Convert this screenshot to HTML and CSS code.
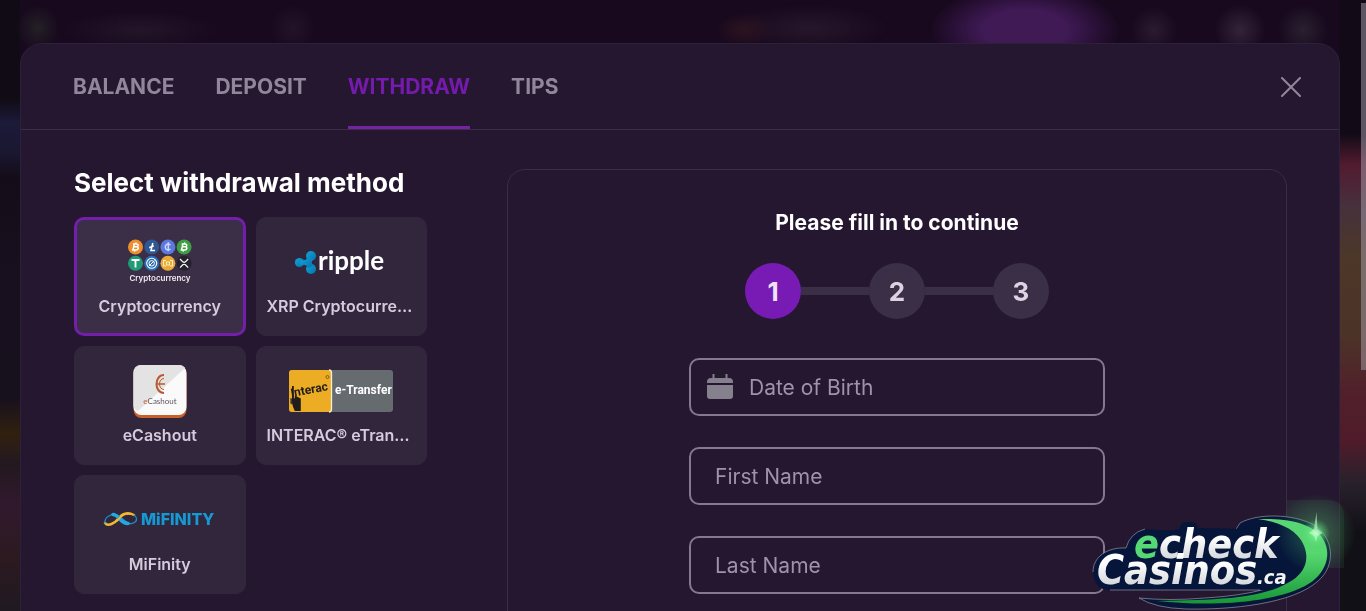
FILE: index.html
```html
<!DOCTYPE html>
<html lang="en">
<head>
<meta charset="utf-8">
<meta name="viewport" content="width=device-width, initial-scale=1">
<title>Withdraw</title>
<link rel="stylesheet" href="styles.css">
</head>
<body>
<div class="backdrop" aria-hidden="true"></div>
<main class="modal">
  <header class="modal-header">
    <nav class="tabs">
      <button class="tab" type="button">BALANCE</button>
      <button class="tab" type="button">DEPOSIT</button>
      <button class="tab tab-active" type="button" aria-current="page">WITHDRAW</button>
      <button class="tab" type="button">TIPS</button>
    </nav>
    <button class="close" type="button" aria-label="Close">
      <svg width="20" height="20" viewBox="0 0 20 20"><path d="M1 1L19 19M19 1L1 19" stroke="currentColor" stroke-width="2" stroke-linecap="round"/></svg>
    </button>
  </header>
  <div class="modal-body">
    <section class="methods">
      <h2 class="methods-title">Select withdrawal method</h2>
      <div class="method-grid">
        <button class="method method-selected" type="button" aria-pressed="true">
          <svg class="method-logo" width="104" height="52" viewBox="0 0 104 52">
            <circle cx="27.500" cy="12" r="7.500" fill="#ee8f2d"/><circle cx="43.700" cy="12" r="7.500" fill="#2f5795"/><circle cx="59.900" cy="12" r="7.500" fill="#5b78dc"/><circle cx="76.100" cy="12" r="7.500" fill="#3f9e42"/>
            <circle cx="27.500" cy="28.300" r="7.500" fill="#1f9b76"/><circle cx="43.700" cy="28.300" r="7.500" fill="#2b6fb6"/><circle cx="59.900" cy="28.300" r="7.500" fill="#e9ab35"/><circle cx="76.100" cy="28.300" r="7.500" fill="#25222d"/>
            <g fill="none" stroke="#fff" stroke-width="1.500" transform="translate(0 -1)">
              <path id="coin-b" d="M26.300 9.700l-1.300 6.500M25 10h3.500c2.500 0 2 2.800 0 2.800h-2.500h2.800c2.400.2 1.700 3.300-.8 3.300h-4M28.200 8.500l-.3 1.500M26.800 16l-.3 1.700"/>
              <use href="#coin-b" x="48.600"/>
              <path d="M44.800 9l-1.800 7.500h4M41.200 13.800l4.500-2"/>
              <path d="M62.500 10.800c-3-2-5.500 0-5.200 2.500s3 3.500 5.300 1.700M60.300 8.300v9" stroke="#c9d4ff"/>
              <path d="M23.500 26h8M27.500 26v7.500" stroke-width="1.900"/>
              <circle cx="43.700" cy="29.300" r="5" stroke-width="1.100"/><circle cx="43.700" cy="29.300" r="2.700" stroke-width="1"/><path d="M41 32l5.400-5.400" stroke-width="1"/>
              <path d="M58 26.500h-2.500v5.500h2.500M62 26.500h2.500v5.500H62M58.500 28h3v3h-3z" stroke-width="1.100" stroke="#fbe9c0"/>
              <path d="M72 25l2.800 2.800q1.300 1.100 2.600 0L80.200 25M72 33.600l2.800-2.800q1.300-1.100 2.600 0l2.800 2.800" stroke-width="1.200"/>
            </g>
            <text class="crypto-word" x="52" y="46" text-anchor="middle">Cryptocurrency</text>
          </svg>
          <span class="method-name">Cryptocurrency</span>
        </button>
        <button class="method" type="button">
          <svg class="method-logo" width="104" height="52" viewBox="0 0 104 52">
            <defs><linearGradient id="ripple-blue" x2="1" y2="1"><stop stop-color="#10a5d8"/><stop offset="1" stop-color="#0870ae"/></linearGradient></defs>
            <g fill="url(#ripple-blue)"><circle cx="10.500" cy="27.500" r="4.600"/><circle cx="22" cy="21" r="5"/><circle cx="22" cy="34" r="5"/><path d="M11 25q7 1 7.500-3l5.500 2q-2.500 3.500 0 7l-5.500 2q-.5-4-7.500-3z"/></g>
            <text class="ripple-word" x="29" y="35">ripple</text>
          </svg>
          <span class="method-name">XRP Cryptocurrency</span>
        </button>
        <button class="method" type="button">
          <svg class="method-logo" width="104" height="52" viewBox="0 0 104 52">
            <rect x="25.500" y="2" width="53" height="52" rx="8" fill="#c7602a"/>
            <rect x="25.500" y="1" width="53" height="50" rx="8" fill="#fafafa"/>
            <path d="M30 47q-4.500-2-4.500-6V9q0-8 8-8H71q4 0 6 3z" fill="#e3e3e3"/>
            <g fill="none" stroke="#b95733"><path d="M56 11c-10 0-10 18 0 18" stroke-width="2"/><path d="M56 14.500c-6 0-6 11 0 11" stroke-width="1"/><path d="M49 20h8" stroke-width="1.500"/></g>
            <text class="cashout-word" x="52" y="40" text-anchor="middle"><tspan fill="#c7602a">e</tspan>Cashout</text>
          </svg>
          <span class="method-name">eCashout</span>
        </button>
        <button class="method" type="button">
          <svg class="method-logo" width="104" height="52" viewBox="0 0 104 52">
            <rect y="6" width="104" height="42" rx="3" fill="#666b70"/>
            <path d="M3 6h37q3 0 3 3v36q0 3-3 3H3q-3 0-3-3V9q0-3 3-3z" fill="#ecac23"/><path d="M40 6q2.500 0 2.500 3v36q0 3-2.500 3" fill="none" stroke="#f7efd8" stroke-width="1.300"/>
            <path d="M1.500 34l1.300.5v6l-1.300-1zM3 22h1.800v12l1 .5v-3l6 3v12.500h-6q-2-4-2.800-8z" fill="#201d1c"/>
            <text class="interac-word" x="2" y="33" transform="rotate(-11 3 31)">Interac</text>
            <circle cx="38.500" cy="13" r="1.500" fill="none" stroke="#5e4513" stroke-width=".7"/>
            <text class="transfer-word" x="46" y="30">e-Transfer</text>
          </svg>
          <span class="method-name">INTERAC® eTransfer</span>
        </button>
        <button class="method" type="button">
          <svg class="method-logo" width="112" height="52" viewBox="0 0 112 52">
            <g fill="none" stroke-linecap="round"><path d="M30 22c-8-4-13 0-16 4S4 34 1 30" stroke="#f4b72b" stroke-width="2.500"/><path d="M1 30c-1-6 8-11 14-7s9 11 16 6c3-2 1-6-1-7" stroke="#168fc5" stroke-width="1.300"/><path d="M9 21.500c6 0 7 9 15 9" stroke="#27a7e0" stroke-width="3.500"/><path d="M13 28c4-5 7-8 14-7" stroke="#f4b72b" stroke-width="2"/></g>
            <text class="mifinity-word" x="37" y="32">MiFINITY</text>
          </svg>
          <span class="method-name">MiFinity</span>
        </button>
      </div>
    </section>
    <form class="panel">
      <h3 class="panel-title">Please fill in to continue</h3>
      <ol class="steps">
        <li class="step step-current" aria-current="step">1</li>
        <li class="step">2</li>
        <li class="step">3</li>
      </ol>
      <div class="fields">
        <div class="field">
          <svg class="calendar" width="26" height="26" viewBox="0 0 26 26" fill="currentColor"><path d="M5.500 0h2v4h11V0h2v4h1.500q4 0 4 4v1H0V8q0-4 4-4h1.500z"/><path d="M0 11h26v11q0 3-3 3H3q-3 0-3-3z"/></svg>
          <input class="field-input" type="text" placeholder="Date of Birth" aria-label="Date of Birth">
        </div>
        <div class="field field-plain"><input class="field-input" type="text" placeholder="First Name" aria-label="First Name"></div>
        <div class="field field-plain"><input class="field-input" type="text" placeholder="Last Name" aria-label="Last Name"></div>
      </div>
    </form>
  </div>
</main>
<div class="scroll-thumb" aria-hidden="true"></div>
<svg class="watermark" width="286" height="131" viewBox="0 0 286 131" role="img" aria-label="echeckCasinos.ca">
  <defs>
    <linearGradient id="silver" x2="0" y2="1"><stop offset=".35" stop-color="#fff"/><stop offset="1" stop-color="#c3c7ce"/></linearGradient>
    <linearGradient id="swoosh" x2="0" y2="1"><stop stop-color="#59d776"/><stop offset=".4" stop-color="#58d970"/><stop offset="1" stop-color="#179538"/></linearGradient>
    <radialGradient id="glow"><stop stop-color="#b8ffc4"/><stop offset=".12" stop-color="#70ee8a" stop-opacity=".7"/><stop offset=".35" stop-color="#52cf6c" stop-opacity=".25"/><stop offset="1" stop-color="#52cf6c" stop-opacity="0"/></radialGradient>
  </defs>
  <path d="M207 20h40q17 0 17 16v52h-57z" fill="#4da064" opacity=".12"/>
  <g fill="#06163a" stroke="#a9a9b8" stroke-width=".6">
    <path d="M160 43C178 33 212 34 232 44C255 57 256 86 238 101C213 124 150 130 106 129Q75 128 59 118Q90 121 125 118Q160 116 186 109L130 90z"/>
  </g>
  <path d="M13 92C13 77 27 67 46 68Q50 53 65 49L78 50Q94 51 99 49L102 43Q109 41 116 43L118 48L170 49L172 43L215 50L225 75L215 98L186 110H30Q14 110 13 92z" fill="#06163a"/>
  <path d="M13 92C13 77 27 67 46 68Q50 53 65 49M30 110H180" fill="none" stroke="#a9a9b8" stroke-width=".6"/>
  <path d="M178 39C208 38 230 43 241 56C254 73 246 95 225 106C188 125 124 126 77 121C132 120 176 119 204 105C228 94 231 76 221 60C213 48 198 42 178 39z" fill="url(#swoosh)"/>
  <text class="brand" x="54" y="78" fill="url(#silver)"><tspan fill="#56d875">e</tspan>check</text>
  <text class="brand" x="17" y="104" fill="url(#silver)">Casinos</text>
  <text class="brand-tld" x="177" y="104" fill="#f2f3f5">.ca</text>
  <circle cx="236" cy="53" r="40" fill="url(#glow)"/>
  <path d="M236.500 32l1 17 5 4-5 3-1.500 6-2-6-5-3 5-4z" fill="#c6ffd2" opacity=".6"/>
</svg>
</body>
</html>
```
FILE: styles.css
```css
* { box-sizing: border-box; }

body {
  margin: 0;
  height: 100vh;
  overflow: hidden;
  display: flex;
  padding: 43px 26px 0 20px;
  background: #18091e;
  color: #fff;
  font-family: Inter, "Liberation Sans", sans-serif;
}

button {
  margin: 0;
  padding: 0;
  border: 0;
  background: none;
  color: inherit;
  font: inherit;
  cursor: pointer;
}

/* Blurred lobby behind the dialog */
.backdrop {
  position: fixed;
  inset: 0;
  background:
    radial-gradient(ellipse 22px 24px at 38px 28px, #232126, transparent),
    radial-gradient(ellipse 80px 20px at 140px 30px, #241629, transparent),
    radial-gradient(ellipse 24px 24px at 293px 28px, #241429, transparent),
    radial-gradient(ellipse 30px 18px at 744px 30px, #2c1420, transparent),
    radial-gradient(ellipse 80px 24px at 810px 28px, #27172b, transparent),
    radial-gradient(ellipse 96px 46px at 1025px 30px, #3f1a55 45%, transparent),
    radial-gradient(circle 24px at 1154px 30px, #2b1c30, transparent),
    radial-gradient(circle 26px at 1240px 30px, #34243a, transparent),
    radial-gradient(circle 26px at 1303px 30px, #2a2030, transparent),
    linear-gradient(#100b14 16%, #1b1a38 20%, #1a1730 25%, #140c18 29%, #18101e 45%, #17101d 65%, #31200f 71%, #231820 76%, #31192d 83%, #2c1a20 91%, #201921) 0 0 / 20px 100% no-repeat,
    linear-gradient(#120b17 22%, #521b30 27%, #46313c 34%, #4c3728 42%, #4c3328 55%, #51202b 64%, #501b2a 72%, #28212b 79%, #121017 87%) 100% 0 / 27px 100% no-repeat;
}

.modal {
  position: relative;
  flex: 1;
  min-width: 0;
  overflow: hidden;
  border: 1px solid #2d203a;
  border-bottom: 0;
  border-radius: 22px 22px 0 0;
  background: #24172f;
}

.modal-header {
  display: flex;
  justify-content: space-between;
  align-items: stretch;
  height: 86px;
  padding: 0 38px 0 52px;
  border-bottom: 1px solid #3b2d47;
}

.tabs { display: flex; gap: 41px; }

.tab {
  border-bottom: 3px solid transparent;
  border-top: 3px solid transparent;
  color: #91869b;
  font-size: 21px;
  font-weight: 700;
}

.tab-active {
  border-bottom-color: #7423a5;
  color: #751aad;
}

.close {
  display: flex;
  align-items: center;
  color: #91869b;
}

.modal-body {
  display: flex;
  align-items: flex-start;
  gap: 80px;
  padding: 39px 52px 0 53px;
}

.methods { width: 353px; }

.methods-title {
  margin: 0 0 20px;
  font-size: 26px;
  font-weight: 700;
  line-height: 28px;
  white-space: nowrap;
}

.method-grid {
  display: grid;
  grid-template-columns: 1fr 1fr;
  gap: 10px;
}

.method {
  display: flex;
  flex-direction: column;
  align-items: center;
  justify-content: flex-end;
  gap: 8px;
  min-width: 0;
  height: 119px;
  padding: 0 10px 18px;
  border: 1px solid #32263d;
  border-radius: 10px;
  background: #32263d;
}

.method-selected {
  padding: 0 8px 16px;
  border: 3px solid #731fac;
  background: #3b2e47;
}

.method-logo { flex: none; overflow: visible; }

.method-name {
  max-width: 100%;
  overflow: hidden;
  color: #d5cbdc;
  font-size: 16px;
  font-weight: 600;
  line-height: 22px;
  text-overflow: ellipsis;
  white-space: nowrap;
}

.crypto-word { font: 600 8px Inter, sans-serif; fill: #f1edf4; }
.ripple-word { font: 700 26px Lato, sans-serif; fill: #fff; }
.cashout-word { font: 400 8px Lato, sans-serif; fill: #5c5560; }
.interac-word { font: 700 12px Roboto, sans-serif; fill: #201d1c; }
.transfer-word { font: 700 12px Roboto, sans-serif; fill: #fff; }
.mifinity-word { font: 800 16px Inter, sans-serif; fill: #1599d3; }

.panel {
  flex: 1;
  min-width: 0;
  height: 700px;
  padding-top: 38px;
  border: 1px solid #3b2d47;
  border-radius: 18px;
}

.panel-title {
  margin: 0 0 25px;
  font-size: 21px;
  font-weight: 700;
  line-height: 30px;
  text-align: center;
}

.steps {
  display: flex;
  justify-content: center;
  margin: 0;
  padding: 0;
  list-style: none;
}

.step {
  position: relative;
  display: grid;
  place-items: center;
  width: 56px;
  height: 56px;
  border-radius: 50%;
  background: #3b2e47;
  color: #dcd2e2;
  font-size: 26px;
  font-weight: 700;
}

.step + .step { margin-left: 68px; }

.step + .step::before {
  content: "";
  position: absolute;
  right: 100%;
  top: 24px;
  width: 68px;
  height: 8px;
  background: #3b2e47;
}

.step-current { background: #781bb5; color: #f0e2f8; }

.fields {
  display: grid;
  grid-template-columns: minmax(0, 1fr);
  gap: 31px;
  width: 416px;
  max-width: 90%;
  margin: 39px auto 0;
}

.field {
  display: flex;
  align-items: center;
  gap: 16px;
  height: 58px;
  padding: 0 16px;
  border: 2px solid #85788f;
  border-radius: 10px;
}

.field-plain { padding: 0 24px; }

.calendar { flex: none; color: #85808d; }

.field-input {
  flex: 1;
  min-width: 0;
  padding: 0;
  border: 0;
  outline: 0;
  background: none;
  color: #d5cbdc;
  font: 400 21px Inter, sans-serif;
}

.field-input::placeholder { color: #a192aa; opacity: 1; }

.scroll-thumb {
  position: fixed;
  top: 3px;
  right: 0;
  width: 5px;
  height: 60vh;
  background: #a9a0ad80;
}

.watermark {
  position: fixed;
  right: 0;
  bottom: 0;
}

.brand { font: italic 700 41px "DejaVu Sans Condensed", "DejaVu Sans", sans-serif; }
.brand-tld { font: italic 700 20px "DejaVu Sans Condensed", "DejaVu Sans", sans-serif; }
```
